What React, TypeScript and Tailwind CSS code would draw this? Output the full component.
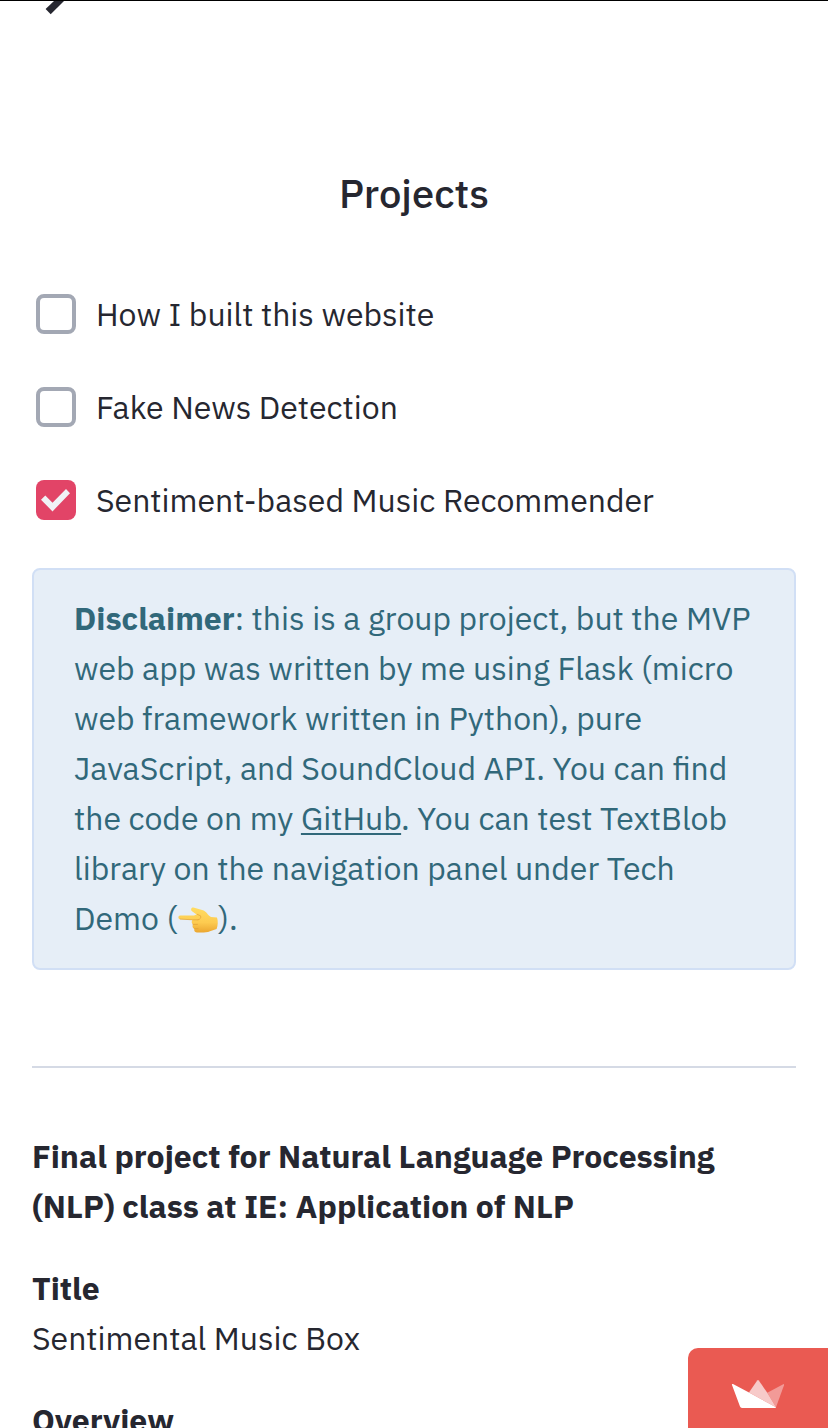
import React from "react";

function Check({ label, checked = false }: { label: string; checked?: boolean }) {
  return (
    <label className="flex h-[93px] items-center gap-5 pl-1">
      {checked ? (
        <span className="size-10 shrink-0 rounded-lg bg-[#e24467]">
          <svg width="40" height="40" viewBox="0 0 40 40">
            <path d="M5 19.7L9.3 15.5L16.5 22.8L30 9L34 13.2L16.5 31.4Z" fill="#f0f2f6" />
          </svg>
        </span>
      ) : (
        <span className="size-10 shrink-0 rounded-lg border-4 border-[#a3a8b4] bg-white" />
      )}
      <span>{label}</span>
    </label>
  );
}

function PointingHand() {
  return (
    <svg className="inline-block h-[26px] w-[41px] overflow-visible align-[-3px]" viewBox="0 0 41 26" role="img" aria-label="👈">
      <defs>
        <linearGradient id="skin" x1="0" y1="0" x2="0" y2="1">
          <stop offset="0" stopColor="#ffdc62" />
          <stop offset="0.6" stopColor="#fdcb50" />
          <stop offset="1" stopColor="#eba630" />
        </linearGradient>
      </defs>
      <path
        d="M3.2 8.4L17 8.4L19.6 7.4L15.4 4.6C13.4 3.2 13.8.2 16.4.5L26 3.2C29 4.1 31 8.3 34 10L40 10.4C41.2 14 41 18.5 39.6 22L33 24.2C29 25.9 24 25.6 19.8 25.4C17.6 25.3 16.8 23.6 17.4 21.8C15.6 21.1 14.9 19 16 17.4C14.5 16.5 14.3 14.5 15.4 13L3.4 12.3C.8 12.1.8 8.5 3.2 8.4Z"
        fill="url(#skin)"
      />
      <path
        d="M3.4 12.1L15.4 12.8H21M16 17.4H20.5M17.4 21.6H21M20.4 7.4L23.5 8.8C24.4 10.5 23.5 12.4 21 12.8"
        fill="none"
        stroke="#e0a038"
        strokeWidth="0.7"
        strokeLinecap="round"
      />
    </svg>
  );
}

export default function App() {
  return (
    <main className="relative h-[1428px] w-[828px] overflow-hidden bg-white px-8 font-['IBM_Plex_Sans','Noto_Sans',sans-serif] text-[32px] leading-[50px] text-[#262730]">
      <div className="absolute left-0 top-0 h-px w-full bg-black" />
      <svg className="absolute left-[44px] top-px" width="24" height="16" viewBox="0 1 24 16">
        <path d="M10 1L1.6 9L6.7 14.2L20 1Z" fill="#262730" />
      </svg>
      <h1 className="h-[267px] pt-[168px] text-center text-[40px] font-medium">Projects</h1>
      <Check label="How I built this website" />
      <Check label="Fake News Detection" />
      <Check label="Sentiment-based Music Recommender" checked />
      <section className="mt-[22px] h-[402px] rounded-lg border-2 border-[#d1dff5] bg-[#e6eef7] px-10 pt-[23px] text-[#31687a]">
        <p>
          <b>Disclaimer</b>: this is a group project, but the MVP web app was written by me using Flask
          (micro web framework written in Python), pure JavaScript, and SoundCloud API. You can find
          the code on my{" "}
          <a href="#" className="underline decoration-2 underline-offset-[3px]">GitHub</a>. You can
          test TextBlob library on the navigation panel under Tech Demo (<PointingHand />).
        </p>
      </section>
      <hr className="mt-24 border-t-2 border-[#d5dae5]" />
      <article className="mt-[63px]">
        <p className="mb-8 font-bold">
          Final project for Natural Language Processing (NLP) class at IE: Application of NLP
        </p>
        <p className="mb-8">
          <b>Title</b>
          <br />
          Sentimental Music Box
        </p>
        <p className="font-bold">Overview</p>
      </article>
      <a href="#" aria-label="Streamlit" className="absolute bottom-0 right-0 h-20 w-[140px] rounded-tl-[10px] bg-[#ea5a52]">
        <svg width="140" height="80" viewBox="0 0 140 80">
          <path d="M79.3 44.7L95.2 36.2Q96.4 35.8 96 37.2L88 59.3Z" fill="#f29a97" />
          <path d="M61 44.5L69.2 32.6Q70 31.6 70.8 32.6L79.3 44.7L88 59.3Z" fill="#f7cac9" />
          <path d="M61 44.5L45 36Q43.5 35.5 44 37L52 58.6Q52.5 60 54 60H87Q88 60 88 59.3Z" fill="#fff" />
        </svg>
      </a>
    </main>
  );
}
